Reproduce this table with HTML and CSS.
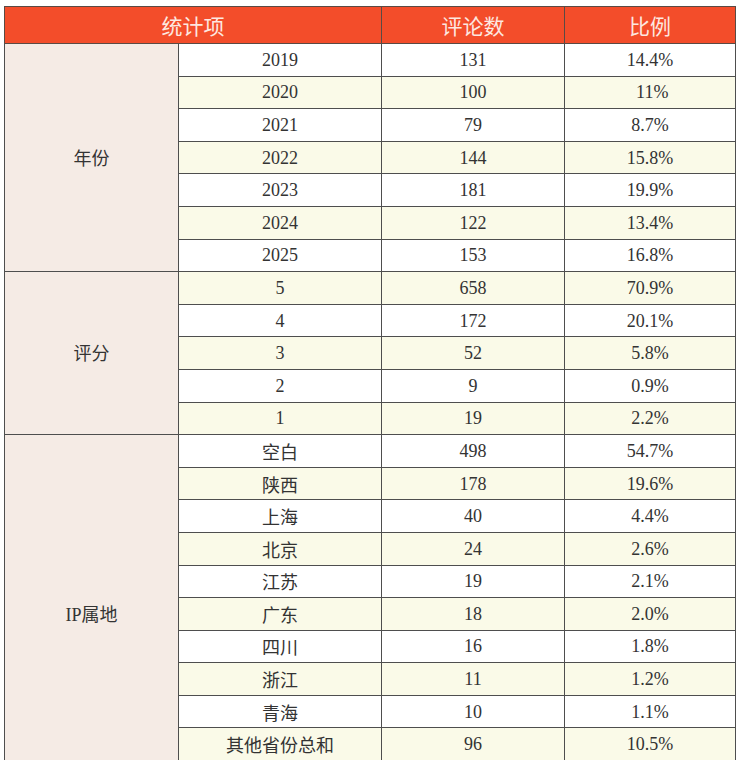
FILE: index.html
```html
<!DOCTYPE html>
<html>
<head>
<meta charset="utf-8">
<link rel="stylesheet" href="styles.css">
</head>
<body>
<table class="stats">
  <colgroup>
    <col class="c1"><col class="c2"><col class="c3"><col class="c4">
  </colgroup>
  <thead>
    <tr><th colspan="2" class="zh">统计项</th><th class="zh">评论数</th><th class="zh">比例</th></tr>
  </thead>
  <tbody>
    <tr><td class="cat" rowspan="7"><span class="zh">年份</span></td><td>2019</td><td>131</td><td>14.4%</td></tr>
    <tr class="alt"><td>2020</td><td>100</td><td>&nbsp;11%</td></tr>
    <tr><td>2021</td><td>79</td><td>8.7%</td></tr>
    <tr class="alt"><td>2022</td><td>144</td><td>15.8%</td></tr>
    <tr><td>2023</td><td>181</td><td>19.9%</td></tr>
    <tr class="alt"><td>2024</td><td>122</td><td>13.4%</td></tr>
    <tr><td>2025</td><td>153</td><td>16.8%</td></tr>
    <tr class="alt"><td class="cat" rowspan="5"><span class="zh">评分</span></td><td>5</td><td>658</td><td>70.9%</td></tr>
    <tr><td>4</td><td>172</td><td>20.1%</td></tr>
    <tr class="alt"><td>3</td><td>52</td><td>5.8%</td></tr>
    <tr><td>2</td><td>9</td><td>0.9%</td></tr>
    <tr class="alt"><td>1</td><td>19</td><td>2.2%</td></tr>
    <tr><td class="cat" rowspan="11">IP<span class="zh">属地</span></td><td class="zh">空白</td><td>498</td><td>54.7%</td></tr>
    <tr class="alt"><td class="zh">陕西</td><td>178</td><td>19.6%</td></tr>
    <tr><td class="zh">上海</td><td>40</td><td>4.4%</td></tr>
    <tr class="alt"><td class="zh">北京</td><td>24</td><td>2.6%</td></tr>
    <tr><td class="zh">江苏</td><td>19</td><td>2.1%</td></tr>
    <tr class="alt"><td class="zh">广东</td><td>18</td><td>2.0%</td></tr>
    <tr><td class="zh">四川</td><td>16</td><td>1.8%</td></tr>
    <tr class="alt"><td class="zh">浙江</td><td>11</td><td>1.2%</td></tr>
    <tr><td class="zh">青海</td><td>10</td><td>1.1%</td></tr>
    <tr class="alt"><td class="zh">其他省份总和</td><td>96</td><td>10.5%</td></tr>
    <tr class="extra"><td></td><td></td><td></td></tr>
  </tbody>
</table>
</body>
</html>
```

FILE: styles.css
```css
html, body {
  margin: 0;
  padding: 0;
  background: #ffffff;
}
body {
  padding: 6px 0 0 4px;
  font-family: "Liberation Serif", "Times New Roman", "DejaVu Serif", "Noto Sans CJK SC", serif;
  color: #333333;
}
.zh {
  font-family: "Noto Sans CJK SC", "Noto Sans CJK JP", sans-serif;
}
.stats {
  border-collapse: collapse;
  table-layout: fixed;
  width: 731px;
}
.c1 { width: 174px; }
.c2 { width: 203px; }
.c3 { width: 183px; }
.c4 { width: 171px; }
.stats th {
  background: #f34d2a;
  color: #fde8e0;
  font-weight: 400;
  font-size: 21px;
  height: 36px;
  padding: 0;
  border: 1px solid #5a4a44;
  text-align: center;
  vertical-align: middle;
  line-height: 1;
}
.stats td {
  height: 31.6px;
  padding: 0;
  border: 1px solid #4e4e4e;
  text-align: center;
  vertical-align: middle;
  font-size: 18px;
  line-height: 1;
  background: #ffffff;
}
.stats tr.alt td {
  background: #fafae8;
}
.stats td.cat,
.stats tr.alt td.cat {
  background: #f5ebe5;
}
```
